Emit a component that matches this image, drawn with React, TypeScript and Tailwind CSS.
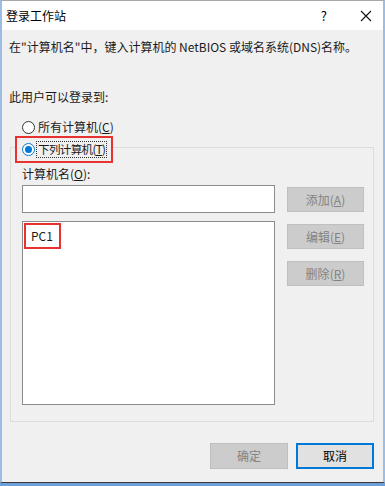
import React from "react";

const FONT = { fontFamily: '"Noto Sans CJK SC", "Noto Sans", sans-serif' };

function Radio({ checked }: { checked?: boolean }) {
  return (
    <span
      className={
        "flex h-[13px] w-[13px] shrink-0 items-center justify-center rounded-full border bg-white " +
        (checked ? "border-[#0078d7]" : "border-[#333333]")
      }
    >
      {checked && <span className="h-[7px] w-[7px] rounded-full bg-[#0078d7]" />}
    </span>
  );
}

function SideButton({ label, hot }: { label: string; hot: string }) {
  return (
    <div className="flex h-[25px] w-[77px] items-center justify-center border border-[#bfbfbf] bg-[#cccccc] text-[12px] text-[#838383]">
      {label}(<span className="underline">{hot}</span>)
    </div>
  );
}

export default function App() {
  return (
    <div
      className="flex h-[486px] w-[385px] flex-col overflow-hidden bg-[#6e9fd6] text-[12px] leading-[16px] text-[#1a1a1a]"
      style={FONT}
    >
      <div className="flex h-[483px] flex-col border-x-2 border-t border-x-[#9cbde4] border-t-[#a8a8a8] border-b border-b-[#3a3a3a]">
        {/* Title bar */}
        <div className="flex h-[29px] shrink-0 items-center bg-white pl-[4px]">
          <span className="text-[12px] text-black">登录工作站</span>
          <span className="ml-auto mr-[33px] text-[13px] text-black">?</span>
          <svg width="12" height="12" viewBox="0 0 12 12" className="mr-[11px]">
            <path d="M1 1 L11 11 M11 1 L1 11" stroke="#111" strokeWidth="1.1" />
          </svg>
        </div>

        {/* Body */}
        <div className="flex flex-1 flex-col bg-[#f0f0f0] pl-[7px] pr-[8px]">
          <p className="mt-[9px] whitespace-nowrap">
            在"计算机名"中，键入计算机的 NetBIOS 或域名系统(DNS)名称。
          </p>
          <p className="mt-[34px]">此用户可以登录到:</p>

          <div className="ml-[13px] mt-[14px] flex items-center gap-[2px]">
            <Radio />
            <span className="whitespace-nowrap pl-[1px]">
              所有计算机(<span className="underline">C</span>)
            </span>
          </div>

          {/* Group box */}
          <div className="relative ml-[1px] mr-[1px] mt-[12px] h-[275px] border border-[#dcdcdc]">
            <div className="absolute left-[4px] top-[-12px] flex h-[27px] w-[98px] items-center gap-[1px] whitespace-nowrap border-2 border-[#e8322f] bg-[#f0f0f0] pl-[5px]">
              <Radio checked />
              <span className="border border-dotted border-[#333] px-[1px] text-[11.5px] leading-[15px] tracking-[-0.6px]">
                下列计算机(<span className="underline">T</span>)
              </span>
            </div>

            <div className="flex pl-[11px] pt-[18px]">
              <div className="flex w-[253px] flex-col">
                <p>
                  计算机名(<span className="underline">O</span>):
                </p>
                <div className="mt-[3px] h-[28px] border border-[#8c8c8c] bg-white" />
                <div className="mt-[8px] h-[184px] border border-[#8c8c8c] bg-white p-[1px]">
                  <div className="flex h-[26px] w-[37px] items-center border-2 border-[#e8322f] pl-[5px]">
                    PC1
                  </div>
                </div>
              </div>
              <div className="ml-[12px] flex flex-col gap-[12px] pt-[21px]">
                <SideButton label="添加" hot="A" />
                <SideButton label="编辑" hot="E" />
                <SideButton label="删除" hot="R" />
              </div>
            </div>
          </div>

          {/* Bottom buttons */}
          <div className="mt-[21px] flex justify-end gap-[8px] pr-[1px]">
            <div className="flex h-[26px] w-[78px] items-center justify-center border border-[#bfbfbf] bg-[#cccccc] text-[#838383]">
              确定
            </div>
            <div className="flex h-[26px] w-[78px] items-center justify-center border-2 border-[#0078d7] bg-[#e1e1e1] text-black">
              取消
            </div>
          </div>
        </div>
      </div>
    </div>
  );
}
